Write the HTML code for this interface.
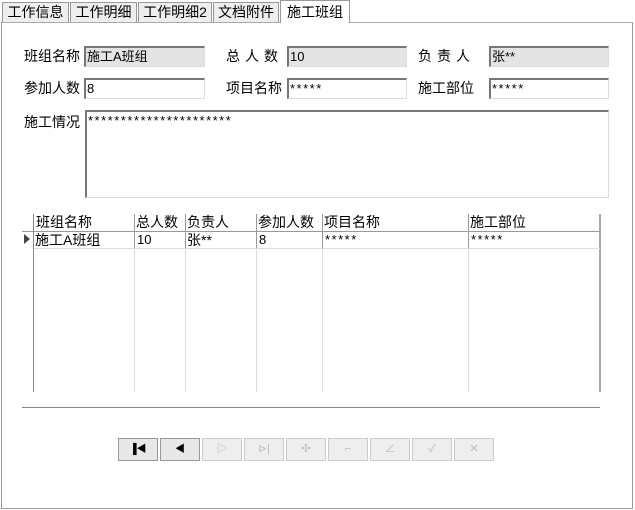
<!DOCTYPE html><html><head><meta charset="utf-8"><style>
*{margin:0;padding:0;box-sizing:border-box}
body{width:635px;height:510px;background:#fff;position:relative;font:13px "Liberation Sans","Noto Sans CJK SC",sans-serif;color:#000;overflow:hidden}
.a{position:absolute}
.tab{position:absolute;top:2px;height:20px;border:1px solid #999;border-bottom:none;background:#eee;font-size:14px;line-height:19px;text-align:center}
.lbl{position:absolute;font-size:14px;line-height:20px}
.in{position:absolute;height:21px;border:1px solid #888;border-right-color:#ddd;border-bottom-color:#ddd;border-top:2px solid #777;border-left:2px solid #777;background:#fff;font-size:13px;line-height:17px;padding-left:1px}
.g{background:#e4e4e4}
.s{letter-spacing:1.5px}
.vl{position:absolute;top:214px;width:1px;height:178px;background:#ddd}
.hd{position:absolute;top:214px;font-size:14px;line-height:17px}
.c{position:absolute;top:232px;font-size:13px;line-height:16px}
.b{position:absolute;top:438px;width:40px;height:23px;border:1px solid #ccc;background:#eee;color:#bbb;text-align:center;font-size:11px;line-height:21px}
</style></head><body>
<div class="a" style="left:1px;top:22px;width:632px;height:487px;border:1px solid #999;border-top-color:#aaa"></div>
<div class="tab" style="left:2px;width:67px">工作信息</div>
<div class="tab" style="left:70px;width:67px">工作明细</div>
<div class="tab" style="left:138px;width:74px">工作明细2</div>
<div class="tab" style="left:213px;width:66px">文档附件</div>
<div class="tab" style="left:280px;top:0;height:23px;width:70px;background:#fff;line-height:22px">施工班组</div>

<div class="lbl" style="left:24px;top:46px">班组名称</div>
<div class="in g" style="left:84px;top:46px;width:121px">施工A班组</div>
<div class="lbl" style="left:226px;top:46px;letter-spacing:5px">总人数</div>
<div class="in g" style="left:287px;top:46px;width:120px">10</div>
<div class="lbl" style="left:418px;top:46px;letter-spacing:5px">负责人</div>
<div class="in g" style="left:489px;top:46px;width:120px">张**</div>

<div class="lbl" style="left:24px;top:78px">参加人数</div>
<div class="in" style="left:84px;top:78px;width:121px">8</div>
<div class="lbl" style="left:226px;top:78px">项目名称</div>
<div class="in s" style="left:287px;top:78px;width:120px">*****</div>
<div class="lbl" style="left:418px;top:78px">施工部位</div>
<div class="in s" style="left:489px;top:78px;width:120px">*****</div>

<div class="lbl" style="left:24px;top:112px">施工情况</div>
<div class="in s" style="left:85px;top:110px;width:524px;height:88px">**********************</div>

<div class="a" style="left:22px;top:214px;width:579px;height:178px;border-right:2px solid #aaa"></div>
<div class="a" style="left:22px;top:231px;width:578px;height:1px;background:#999"></div>
<div class="a" style="left:33px;top:248px;width:567px;height:1px;background:#ddd"></div>
<div class="vl" style="left:33px;background:#888"></div>
<div class="vl" style="left:134px"></div><div class="vl" style="left:185px"></div><div class="vl" style="left:256px"></div><div class="vl" style="left:322px"></div><div class="vl" style="left:468px"></div>
<div class="a" style="left:134px;top:214px;width:1px;height:34px;background:#999"></div>
<div class="a" style="left:185px;top:214px;width:1px;height:34px;background:#999"></div>
<div class="a" style="left:256px;top:214px;width:1px;height:34px;background:#999"></div>
<div class="a" style="left:322px;top:214px;width:1px;height:34px;background:#999"></div>
<div class="a" style="left:468px;top:214px;width:1px;height:34px;background:#999"></div>
<div class="hd" style="left:36px">班组名称</div><div class="hd" style="left:136px">总人数</div><div class="hd" style="left:187px">负责人</div><div class="hd" style="left:258px">参加人数</div><div class="hd" style="left:324px">项目名称</div><div class="hd" style="left:470px">施工部位</div>
<div class="a" style="left:24px;top:234px;width:0;height:0;border-left:6px solid #444;border-top:5px solid transparent;border-bottom:5px solid transparent"></div>
<div class="c" style="left:35px;font-size:14px">施工A班组</div><div class="c" style="left:137px">10</div><div class="c" style="left:187px;font-size:14px">张**</div><div class="c" style="left:259px">8</div><div class="c s" style="left:325px">*****</div><div class="c s" style="left:471px">*****</div>

<div class="a" style="left:22px;top:407px;width:578px;height:1px;background:#888"></div>

<div class="b" style="left:118px;border-color:#999;color:#000;background:#e8e8e8;font-size:10px">▐◀</div>
<div class="b" style="left:160px;border-color:#999;color:#000;background:#e8e8e8;font-size:10px">◀</div>
<div class="b" style="left:202px">▷</div>
<div class="b" style="left:244px">⊳|</div>
<div class="b" style="left:286px">✣</div>
<div class="b" style="left:328px">⌐</div>
<div class="b" style="left:370px">∠</div>
<div class="b" style="left:412px">✓</div>
<div class="b" style="left:454px">✕</div>
</body></html>
